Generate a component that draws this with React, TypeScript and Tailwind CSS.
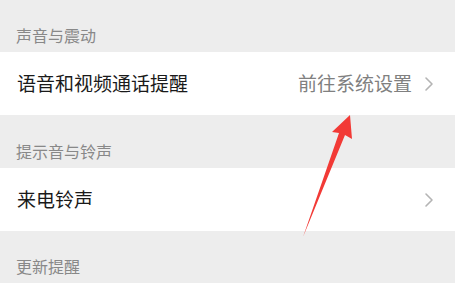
import React from "react";

const Header = ({ text, h }: { text: string; h: string }) => (
  <div className={`${h} flex items-end px-4 pb-[7px] text-[16px] leading-[20px] text-[#888888]`}>
    {text}
  </div>
);

const Chevron = () => (
  <svg width="10" height="16" viewBox="0 0 10 16" className="ml-[12px]">
    <path d="M2 2 L8 8 L2 14" fill="none" stroke="#b4b4b4" strokeWidth="1.6" strokeLinecap="round" strokeLinejoin="round" />
  </svg>
);

export default function App() {
  return (
    <div
      className="relative w-[455px] h-[286px] overflow-hidden bg-[#ededed]"
      style={{ fontFamily: '"Noto Sans CJK SC", "Noto Sans", sans-serif' }}
    >
      <Header text="声音与震动" h="h-[52px]" />
      <div className="h-[63px] bg-white flex items-center pl-[17px] pr-[21px]">
        <span className="text-[19px] text-[#1a1a1a] flex-1">语音和视频通话提醒</span>
        <span className="text-[19px] text-[#808080]">前往系统设置</span>
        <Chevron />
      </div>
      <Header text="提示音与铃声" h="h-[53px]" />
      <div className="h-[63px] bg-white flex items-center pl-[17px] pr-[21px]">
        <span className="text-[19px] text-[#1a1a1a] flex-1">来电铃声</span>
        <Chevron />
      </div>
      <Header text="更新提醒" h="h-[52px]" />
      <div className="h-[10px] bg-white" />
      <svg className="absolute left-0 top-0" width="455" height="286" viewBox="0 0 455 286">
        <polygon
          points="350,115 352,139 345,135 303,237 339,133 332,132"
          fill="#f23a36"
        />
      </svg>
    </div>
  );
}
